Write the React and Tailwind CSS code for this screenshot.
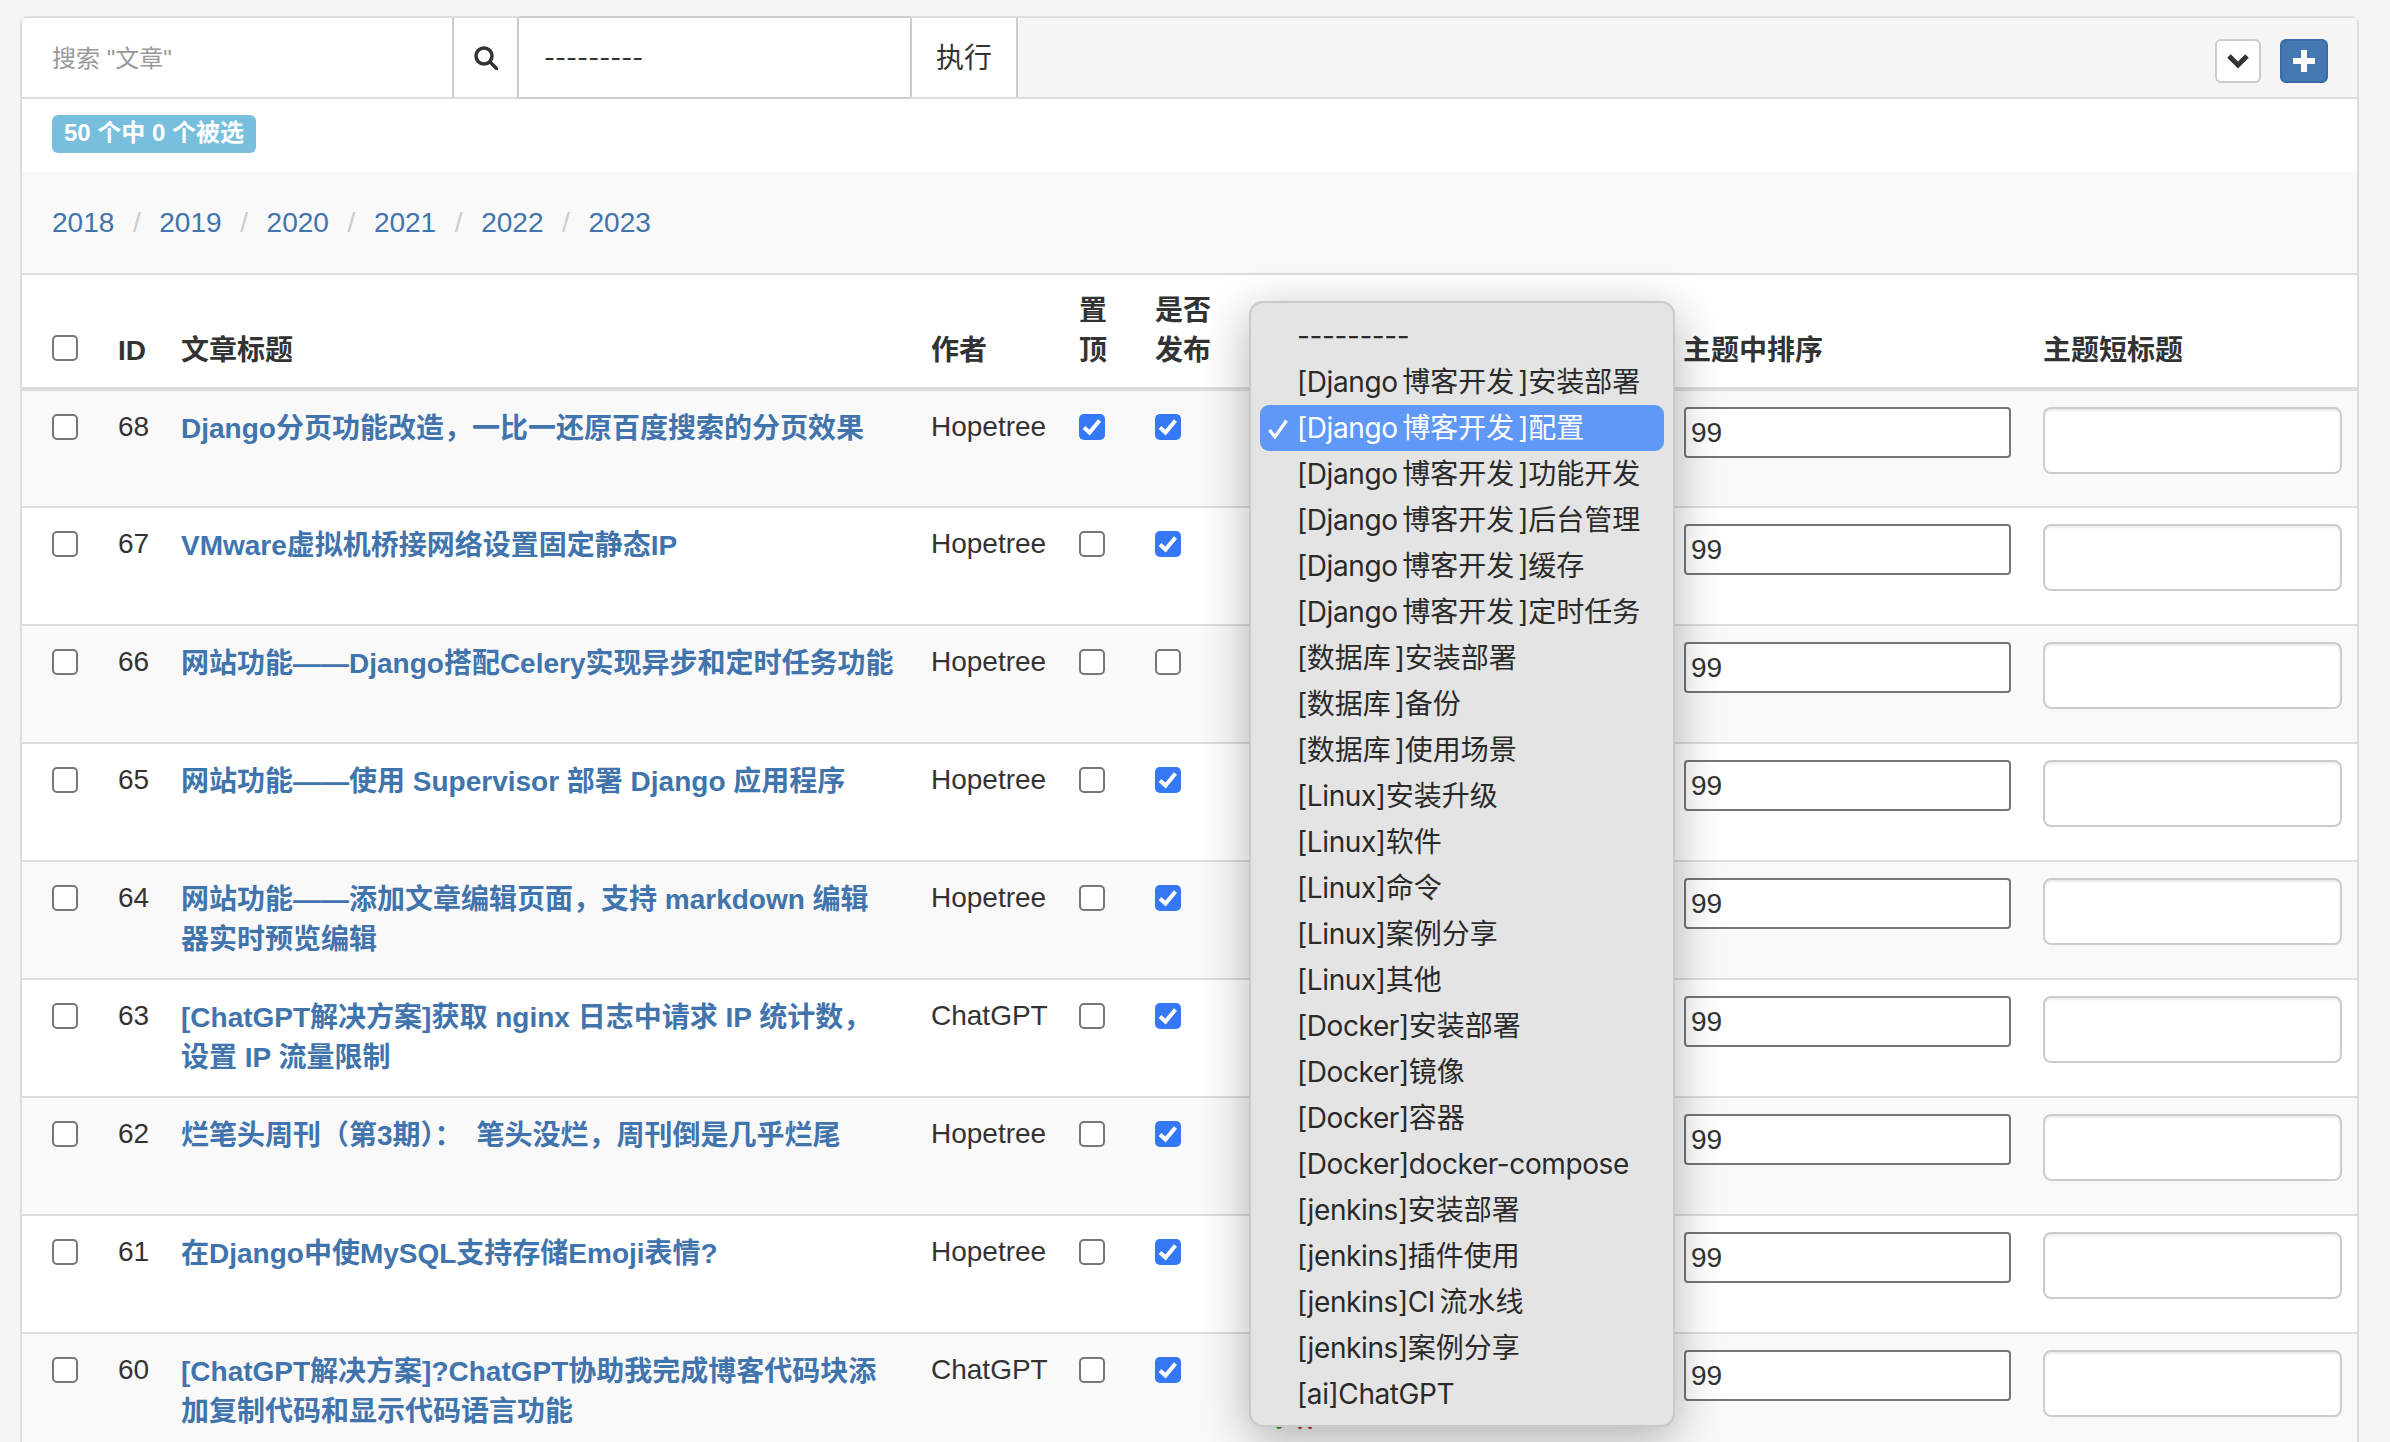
const ROWS = [
  { id: 68, title: 'Django分页功能改造\uFF0C一比一还原百度搜索的分页效果', author: 'Hopetree', top: true, pub: true },
  { id: 67, title: 'VMware虚拟机桥接网络设置固定静态IP', author: 'Hopetree', top: false, pub: true },
  { id: 66, title: '网站功能——Django搭配Celery实现异步和定时任务功能', author: 'Hopetree', top: false, pub: false },
  { id: 65, title: '网站功能——使用 Supervisor 部署 Django 应用程序', author: 'Hopetree', top: false, pub: true },
  { id: 64, title: '网站功能——添加文章编辑页面\uFF0C支持 markdown 编辑\n器实时预览编辑', author: 'Hopetree', top: false, pub: true },
  { id: 63, title: '[ChatGPT解决方案]获取 nginx 日志中请求 IP 统计数\uFF0C\n设置 IP 流量限制', author: 'ChatGPT', top: false, pub: true },
  { id: 62, title: '烂笔头周刊\uFF08第3期\uFF09\uFF1A\u2002笔头没烂\uFF0C周刊倒是几乎烂尾', author: 'Hopetree', top: false, pub: true },
  { id: 61, title: '在Django中使MySQL支持存储Emoji表情?', author: 'Hopetree', top: false, pub: true },
  { id: 60, title: '[ChatGPT解决方案]?ChatGPT协助我完成博客代码块添\n加复制代码和显示代码语言功能', author: 'ChatGPT', top: false, pub: true },
];

const TOPICS = [
  '---------',
  '[Django\u2009博客开发]安装部署',
  '[Django\u2009博客开发]配置',
  '[Django\u2009博客开发]功能开发',
  '[Django\u2009博客开发]后台管理',
  '[Django\u2009博客开发]缓存',
  '[Django\u2009博客开发]定时任务',
  '[数据库]安装部署',
  '[数据库]备份',
  '[数据库]使用场景',
  '[Linux]安装升级',
  '[Linux]软件',
  '[Linux]命令',
  '[Linux]案例分享',
  '[Linux]其他',
  '[Docker]安装部署',
  '[Docker]镜像',
  '[Docker]容器',
  '[Docker]docker-compose',
  '[jenkins]安装部署',
  '[jenkins]插件使用',
  '[jenkins]CI\u2009流水线',
  '[jenkins]案例分享',
  '[ai]ChatGPT',
];

const YEARS = ['2018', '2019', '2020', '2021', '2022', '2023'];

function Checkbox({ checked }) {
  if (checked) {
    return (
      <span className="flex h-[26px] w-[26px] items-center justify-center rounded-[5px] bg-[#3478f6]">
        <svg viewBox="0 0 26 26" className="h-[26px] w-[26px]" fill="none" stroke="white" strokeWidth="4">
          <path d="M5 13.5l5.5 5L20.5 6.500" />
        </svg>
      </span>
    );
  }
  return <span className="block h-[26px] w-[26px] rounded-[5px] border-2 border-[#767676] bg-white" />;
}

function Row({ row, index }) {
  return (
    <tr className={`h-[118px] border-b-2 border-[#ddd] ${index % 2 === 0 ? 'bg-[#f9f9f9]' : 'bg-white'}`}>
      <td className="pl-[30px] pt-[23px] align-top">
        <Checkbox />
      </td>
      <td className="pl-4 pt-4 align-top leading-10">{row.id}</td>
      <td className="whitespace-pre-line pl-4 pt-[18px] align-top font-bold leading-10 text-[#4174ad]">{row.title}</td>
      <td className="pl-4 pt-4 align-top leading-10">{row.author}</td>
      <td className="pl-4 pt-[23px] align-top">
        <Checkbox checked={row.top} />
      </td>
      <td className="pl-4 pt-[23px] align-top">
        <Checkbox checked={row.pub} />
      </td>
      <td className="pl-[28px] pr-4 pt-4 align-top">
        <div className="h-[50px] w-[395px] rounded border-2 border-[#767676] bg-white" />
        <div className="ml-[21px] mt-[7px] flex h-[22px] items-end gap-[15px]">
          <span className="h-[20px] w-[6px] rounded-sm bg-[#4a9a1f]" />
          <svg viewBox="0 0 16 16" className="h-[16px] w-[16px]" stroke="#c0342c" strokeWidth="3">
            <path d="M2 0l12 16M14 0L2 16" />
          </svg>
        </div>
      </td>
      <td className="pl-4 pt-4 align-top">
        <input
          defaultValue="99"
          className="h-[51px] w-[327px] rounded border-2 border-[#767676] bg-white px-[5px] text-[28px] text-[#333] outline-none"
        />
      </td>
      <td className="pl-4 pt-4 align-top">
        <input className="h-[67px] w-[299px] rounded-lg border-2 border-[#ccc] bg-white shadow-[inset_0_2px_2px_rgba(0,0,0,0.075)] outline-none" />
      </td>
    </tr>
  );
}

// latin runs are tightened to sit closer to the system font, chinese stays at full width
function TopicLabel({ text }) {
  const parts = text.split(/([\u4e00-\u9fff]+)/);
  return parts.map((part, i) =>
    i % 2 === 1 ? (
      <span key={i} className={parts[i + 1].startsWith(']') ? 'pr-1 tracking-normal' : 'tracking-normal'}>
        {part}
      </span>
    ) : (
      part
    ),
  );
}

function TopicMenu() {
  return (
    <div className="absolute left-[1249px] top-[301px] h-[1126px] w-[426px] rounded-[14px] border-2 border-[#c9c9c9] bg-[#e4e4e4] px-[9px] pb-[6px] pt-[10px] font-['Inter','Noto_Sans_CJK_SC',sans-serif] text-[28px] tracking-[-0.4px] text-[#2a2a2a] shadow-[0_12px_48px_rgba(0,0,0,0.3)]">
      {TOPICS.map((topic, i) => (
        <div
          key={topic}
          className={`relative h-[46px] whitespace-nowrap rounded-[9px] pl-[37px] leading-[46px] ${i === 2 ? 'bg-[#6098f8] text-white' : ''}`}
        >
          {i === 2 && (
            <svg viewBox="0 0 20 20" className="absolute left-[8px] top-[14px] h-[20px] w-[20px]" fill="none" stroke="white" strokeWidth="3.200">
              <path d="M1.500 11l5.500 7L18.500 1.500" />
            </svg>
          )}
          <TopicLabel text={topic} />
        </div>
      ))}
    </div>
  );
}

export default function App() {
  return (
    <div className="relative h-[1442px] overflow-hidden bg-[#f5f5f5] font-['Liberation_Sans','Noto_Sans_CJK_SC',sans-serif] text-[28px] text-[#333]">
      <div className="ml-5 mt-4 w-[2339px] rounded-t-lg border-x-2 border-t-2 border-[#ddd] bg-white">
        <div className="flex h-[81px] items-stretch justify-between border-b-2 border-[#ddd] bg-[#f5f5f5]">
          <div className="flex">
            <div className="flex w-[430px] items-center rounded-tl-lg bg-white pl-[30px] pt-[2px] text-2xl text-[#999]">搜索 "文章"</div>
            <div className="flex w-[67px] items-center justify-center border-x-2 border-[#ccc] bg-white">
              <svg viewBox="0 0 24 24" className="h-6 w-6" fill="none" stroke="#333" strokeWidth="3.500">
                <circle cx="10" cy="10" r="8" />
                <path d="M16 16l6.500 6.500" strokeLinecap="round" />
              </svg>
            </div>
            <div className="-my-[2px] flex w-[391px] items-center border-y-2 border-[#ccc] bg-white pl-[25px] font-['Inter',sans-serif] text-2xl">---------</div>
            <div className="flex w-[108px] items-center justify-center border-x-2 border-[#ccc] bg-white pt-[2px]">执行</div>
          </div>
          <div className="mr-[29px] flex items-center gap-[19px] pt-[6px]">
            <button className="flex h-[44px] w-[46px] items-center justify-center rounded-md border-2 border-[#ccc] bg-white">
              <svg viewBox="0 0 22 16" className="h-[16px] w-[22px]" fill="none" stroke="#333" strokeWidth="5">
                <path d="M2 3l9 9 9-9" />
              </svg>
            </button>
            <button className="flex h-[44px] w-[48px] items-center justify-center rounded-md border-2 border-[#3a6ba3] bg-[#4378b0]">
              <svg viewBox="0 0 22 22" className="h-[22px] w-[22px]" fill="none" stroke="white" strokeWidth="6">
                <path d="M11 0v22M0 11h22" />
              </svg>
            </button>
          </div>
        </div>

        <div className="h-[73px] bg-white pl-[30px] pt-4">
          <span className="block h-[38px] w-[204px] rounded-md bg-[#78bfdd] text-center text-2xl font-bold leading-[36px] text-white">
            50 个中 0 个被选
          </span>
        </div>

        <div className="flex h-[103px] items-center border-b-2 border-[#ddd] bg-[#f9f9f9] pl-[30px] text-[#4174ad]">
          {YEARS.map((year, i) => (
            <span key={year} className="flex items-center">
              {i > 0 && <span className="w-[45px] text-center text-[#ccc]">/</span>}
              {year}
            </span>
          ))}
        </div>

        <table className="w-full table-fixed">
          <colgroup>
            <col className="w-[80px]" />
            <col className="w-[63px]" />
            <col className="w-[750px]" />
            <col className="w-[148px]" />
            <col className="w-[76px]" />
            <col className="w-[88px]" />
            <col className="w-[441px]" />
            <col className="w-[359px]" />
            <col className="w-[330px]" />
          </colgroup>
          <thead>
            <tr className="border-b-4 border-[#ddd] bg-white text-left font-bold">
              <th className="pb-[26px] pl-[30px] align-bottom">
                <Checkbox />
              </th>
              <th className="px-4 pb-4 align-bottom leading-10">ID</th>
              <th className="px-4 pb-4 align-bottom leading-10">文章标题</th>
              <th className="px-4 pb-4 align-bottom leading-10">作者</th>
              <th className="pb-4 pl-4 pr-[30px] pt-[16px] align-bottom leading-10">置顶</th>
              <th className="pb-4 pl-4 pr-4 align-bottom leading-10">是否发布</th>
              <th />
              <th className="pb-4 pl-[15px] align-bottom leading-10">主题中排序</th>
              <th className="px-4 pb-4 align-bottom leading-10">主题短标题</th>
            </tr>
          </thead>
          <tbody>
            {ROWS.map((row, i) => (
              <Row key={row.id} row={row} index={i} />
            ))}
          </tbody>
        </table>
      </div>
      <TopicMenu />
    </div>
  );
}
